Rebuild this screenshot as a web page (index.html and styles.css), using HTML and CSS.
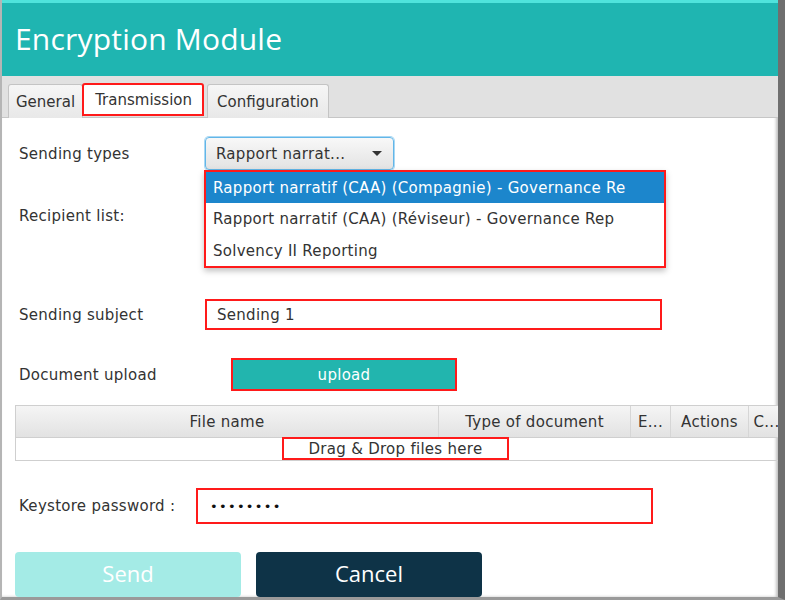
FILE: index.html
```html
<!DOCTYPE html>
<html>
<head>
<meta charset="utf-8">
<link rel="stylesheet" href="styles.css">
</head>
<body>
<div class="frame">
  <div class="header"><h1 class="title">Encryption Module</h1></div>
  <div class="tabbar">
    <div class="tab">General</div>
    <div class="tab tab-active">Transmission</div>
    <div class="tab tab-last">Configuration</div>
  </div>
  <div class="content">
    <div class="row row-types">
      <div class="label lab-wide">Sending types</div>
      <div class="combo-wrap">
        <div class="combo"><span>Rapport narrat...</span><span class="arrow"></span></div>
        <div class="popup">
          <div class="item item-sel">Rapport narratif (CAA) (Compagnie) - Governance Re</div>
          <div class="item">Rapport narratif (CAA) (Réviseur) - Governance Rep</div>
          <div class="item">Solvency II Reporting</div>
        </div>
      </div>
    </div>
    <div class="row row-recip">
      <div class="label lab-wide">Recipient list:</div>
    </div>
    <div class="row row-subject">
      <div class="label lab-wide">Sending subject</div>
      <div class="input input-subject">Sending 1</div>
    </div>
    <div class="row row-upload">
      <div class="label lab-upload">Document upload</div>
      <div class="upload-btn">upload</div>
    </div>
    <div class="table">
      <div class="thead">
        <div class="th th-name">File name</div>
        <div class="th th-type">Type of document</div>
        <div class="th th-e">E...</div>
        <div class="th th-act">Actions</div>
        <div class="th th-c">C...</div>
      </div>
      <div class="tbody">
        <div class="drop">Drag &amp; Drop files here</div>
      </div>
    </div>
    <div class="row row-key">
      <div class="label lab-key">Keystore password :</div>
      <div class="input input-key"><span class="dots">••••••••</span></div>
    </div>
    <div class="buttons">
      <div class="btn btn-send">Send</div>
      <div class="btn btn-cancel">Cancel</div>
    </div>
  </div>
</div>
</body>
</html>
```

FILE: styles.css
```css
* { box-sizing: border-box; }
html, body { margin: 0; padding: 0; background: #ffffff; }
body {
  font-family: "DejaVu Sans", "Liberation Sans", sans-serif;
  color: #333333;
  width: 785px;
  height: 600px;
  overflow: hidden;
}
.frame {
  width: 785px;
  height: 600px;
  overflow: hidden;
  background: #ffffff;
  border-left: 2px solid #b5b5b5;
  border-right: 7px solid #6f6f6f;
  border-bottom: 3px solid #9a9a9a;
  box-shadow: inset -2px 0 3px rgba(0,0,0,0.25);
  position: relative;
}
.header {
  height: 76px;
  background: #1fb5b1;
  border-top: 3px solid #4fe3dc;
  padding-left: 13px;
  display: flex;
  align-items: center;
}
.title {
  margin: 0;
  font-family: "Open Sans", "DejaVu Sans", sans-serif;
  font-weight: 400;
  font-size: 30px;
  color: #ffffff;
  letter-spacing: 0.2px;
  padding-bottom: 2px;
}
.tabbar {
  height: 42px;
  background: #e1e1e1;
  border-bottom: 1px solid #c6c6c6;
  display: flex;
  align-items: flex-end;
  padding-left: 6px;
}
.tab {
  height: 34px;
  padding: 0 7px;
  display: flex;
  align-items: center;
  font-size: 15px;
  color: #333;
  background: linear-gradient(#f6f6f6, #e8e8e8);
  border: 1px solid #c4c4c4;
  border-bottom: none;
  border-radius: 3px 3px 0 0;
  margin-bottom: -1px;
}
.tab-active {
  background: #ffffff;
  border: 2px solid #ff1a1a;
  height: 33px;
  margin-bottom: 1px;
  margin-left: -1px;
  padding: 0 10px 0 11px;
}
.tab-last { margin-left: 3px; padding: 0 9px; }
.content {
  padding-left: 13px;
  letter-spacing: 0.28px;
}
.row {
  display: flex;
  align-items: center;
  font-size: 15px;
}
.label { color: #333; padding-left: 4px; }
.lab-wide { width: 190px; }
.lab-upload { width: 216px; }
.lab-key { width: 181px; }
.row-types { margin-top: 19px; height: 33px; }
.combo-wrap { position: relative; }
.combo {
  width: 189px;
  height: 33px;
  border: 1px solid #62b6e8;
  border-radius: 4px;
  background: linear-gradient(#f8f8f8, #e3e3e3);
  box-shadow: 0 0 0 1px #a9d8f4;
  display: flex;
  align-items: center;
  justify-content: space-between;
  padding: 0 11px 0 10px;
  font-size: 15px;
  color: #333;
}
.arrow {
  width: 0; height: 0;
  border-left: 5px solid transparent;
  border-right: 5px solid transparent;
  border-top: 5px solid #333;
}
.popup {
  position: absolute;
  top: 33px;
  left: -1px;
  width: 462px;
  height: 98px;
  border: 2px solid #ff1a1a;
  background: #ffffff;
  box-shadow: 0 3px 6px rgba(0,0,0,0.25);
  z-index: 5;
}
.item {
  height: 32px;
  display: flex;
  align-items: center;
  padding-left: 7px;
  font-size: 15px;
  color: #333;
  white-space: nowrap;
}
.item-sel { background: #1c86cc; color: #ffffff; height: 31px; }
.row-recip { margin-top: 30px; height: 32px; }
.row-subject { margin-top: 67px; height: 31px; }
.input {
  height: 100%;
  border: 2px solid #ff1a1a;
  background: #ffffff;
  display: flex;
  align-items: center;
  font-size: 15px;
  color: #333;
}
.input-subject { width: 457px; padding-left: 10px; }
.row-upload { margin-top: 28px; height: 33px; }
.upload-btn {
  width: 226px;
  height: 33px;
  background: #22b5ae;
  border: 2px solid #ff1a1a;
  color: #ffffff;
  display: flex;
  align-items: center;
  justify-content: center;
  font-size: 15px;
}
.table {
  margin-top: 14px;
  width: 770px;
  border: 1px solid #cfcfcf;
  font-size: 15px;
}
.thead {
  display: flex;
  height: 32px;
  background: linear-gradient(#f5f5f5, #e2e2e2);
  border-bottom: 1px solid #cfcfcf;
}
.th {
  display: flex;
  align-items: center;
  justify-content: center;
  border-right: 1px solid #d6d6d6;
  color: #333;
  white-space: nowrap;
}
.th-name { width: 423px; }
.th-type { width: 192px; }
.th-e { width: 40px; }
.th-act { width: 78px; }
.th-c { width: 35px; border-right: none; }
.tbody {
  height: 22px;
  display: flex;
  justify-content: center;
}
.drop {
  width: 227px;
  height: 23px;
  margin-top: -1px;
  border: 2px solid #ff1a1a;
  display: flex;
  align-items: center;
  justify-content: center;
  color: #333;
  margin-left: -9px;
}
.row-key { margin-top: 27px; height: 36px; }
.input-key { width: 457px; padding-left: 12px; }
.dots { color: #111; font-size: 13px; letter-spacing: 1.3px; }
.buttons {
  margin-top: 28px;
  display: flex;
  gap: 15px;
}
.btn {
  width: 226px;
  height: 45px;
  padding-bottom: 3px;
  border-radius: 4px;
  display: flex;
  align-items: center;
  justify-content: center;
  font-size: 22px;
  color: #ffffff;
  letter-spacing: 0;
  font-family: "Open Sans", "DejaVu Sans", sans-serif;
}
.btn-send { background: #a4ebe6; }
.btn-cancel { background: #0e3347; }
```
